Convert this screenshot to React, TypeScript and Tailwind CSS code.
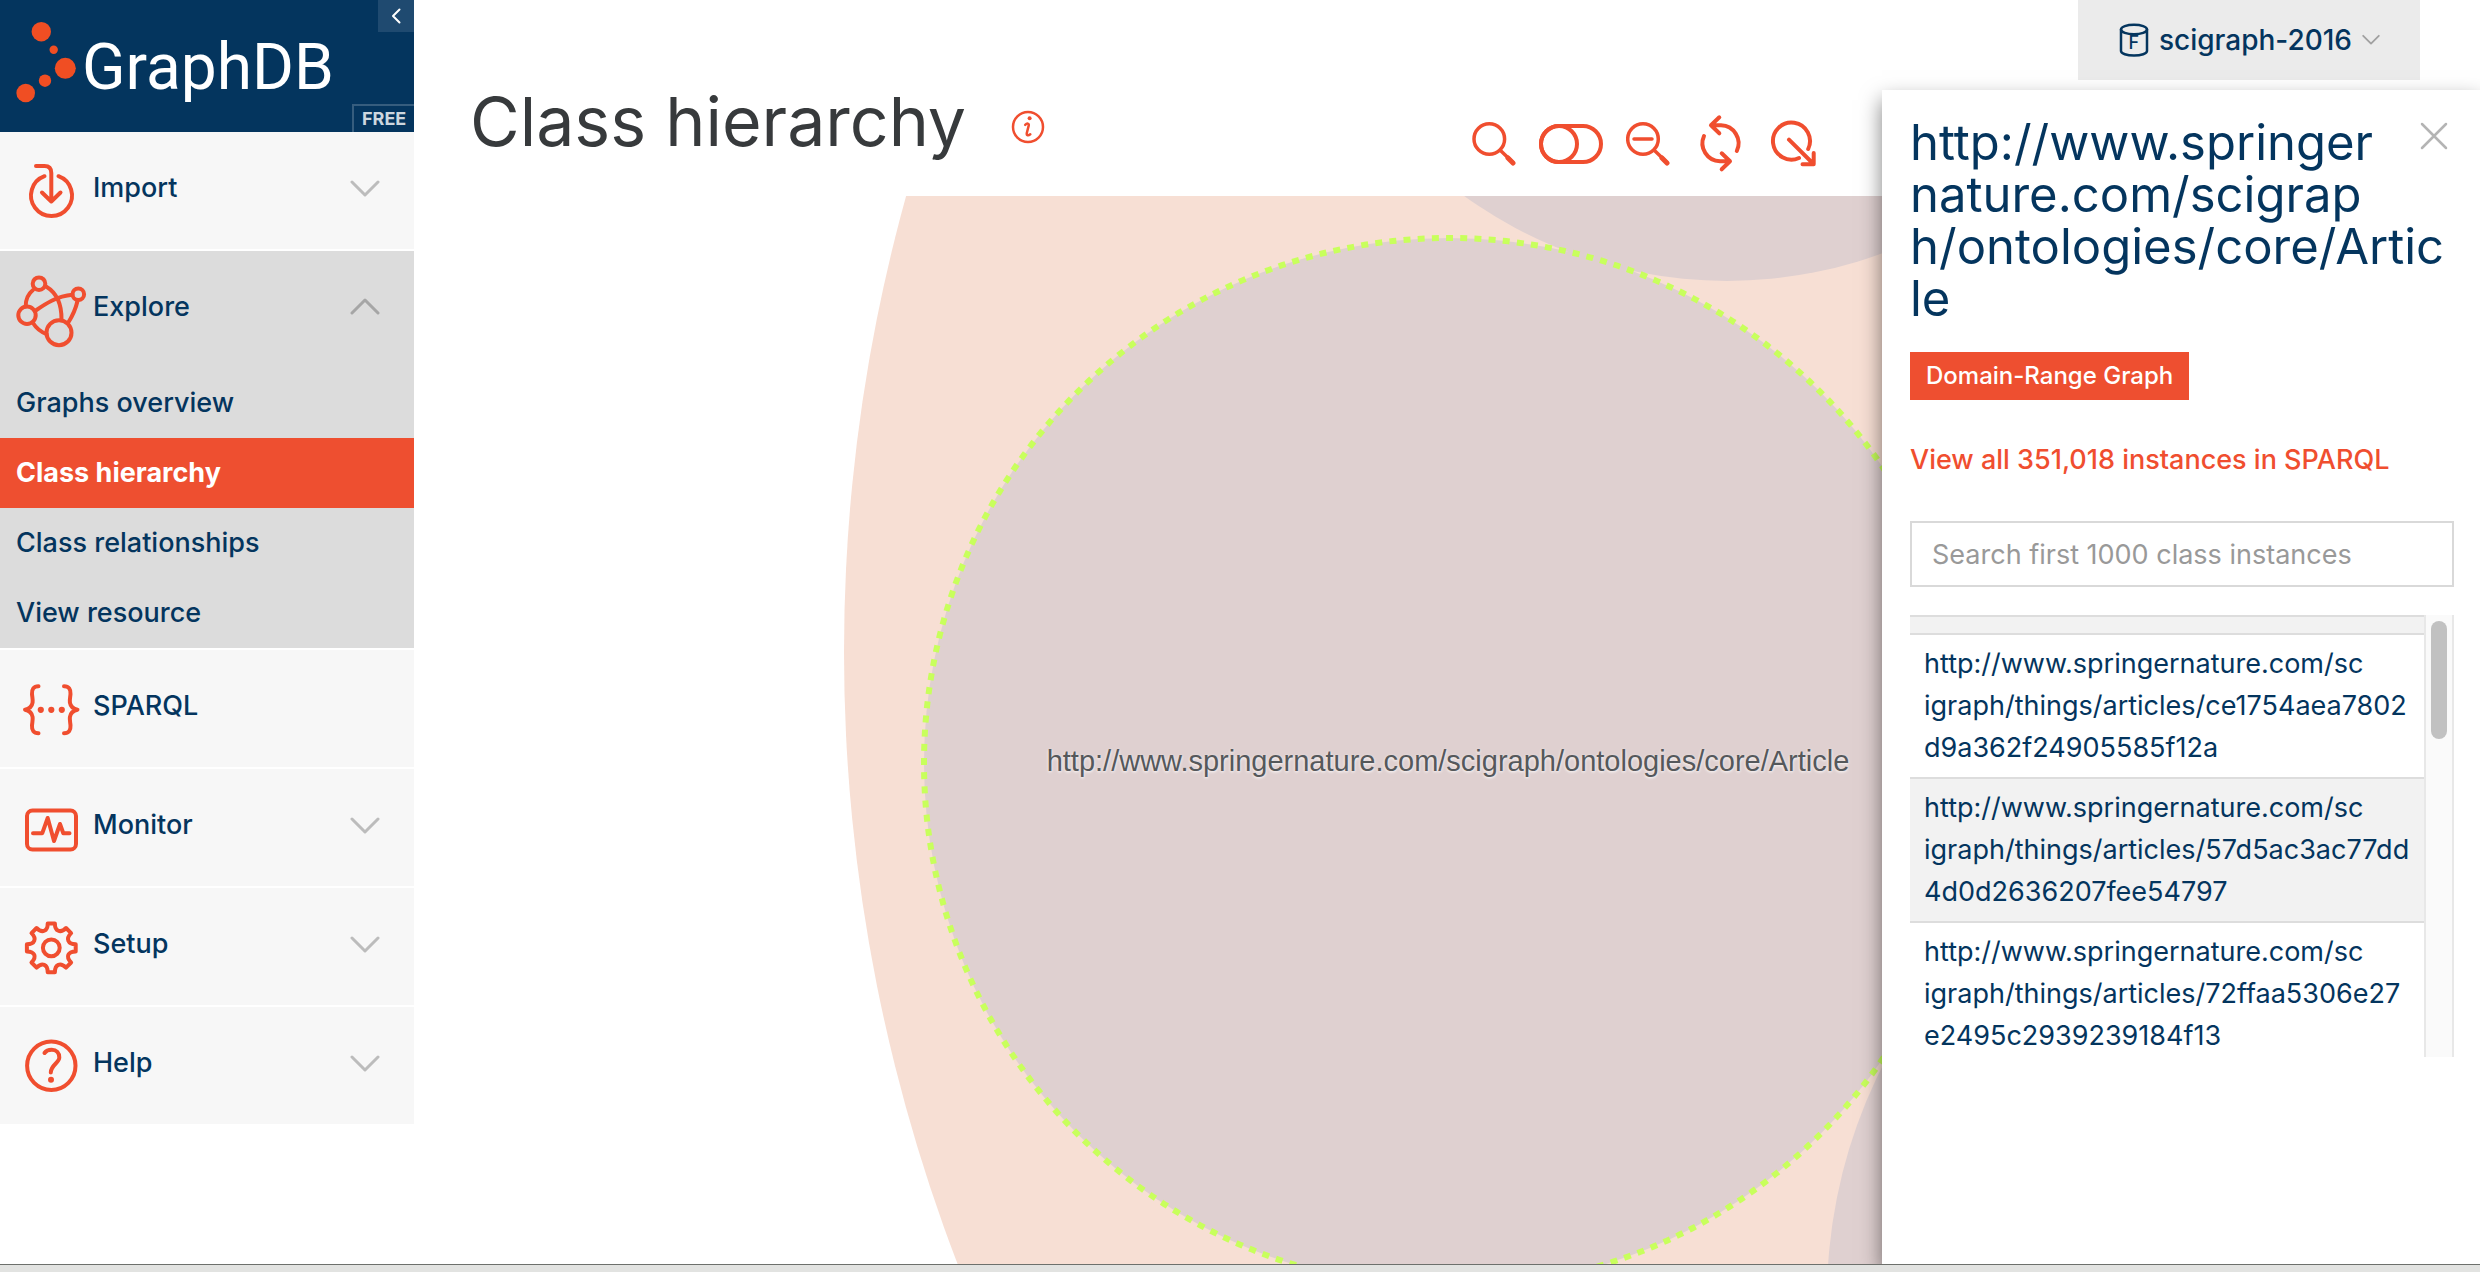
import React from "react";

/* ---------- icons ---------- */

type IconProps = { children: React.ReactNode; className: string; viewBox: string; width?: number };

function Stroke({ children, className, viewBox, width = 4 }: IconProps) {
  return (
    <svg
      aria-hidden="true"
      className={className}
      viewBox={viewBox}
      fill="none"
      stroke="currentColor"
      strokeWidth={width}
      strokeLinecap="round"
      strokeLinejoin="round"
    >
      {children}
    </svg>
  );
}

function MenuIcon({ children }: { children: React.ReactNode }) {
  return (
    <Stroke className="size-[72px] shrink-0 overflow-visible text-[#f04e2f]" viewBox="0 0 72 72">
      {children}
    </Stroke>
  );
}

const importIcon = (
  <MenuIcon>
    <path d="M29.5 21.2A20.5 20.5 0 1 0 43.5 21.2" />
    <path d="M21 11H29.5Q36.3 11 36.3 18V46.5M27 37.5L36.3 46.5L45.5 37.5" />
  </MenuIcon>
);

const exploreIcon = (
  <MenuIcon>
    <circle cx="24" cy="9.7" r="6.3" />
    <circle cx="63.3" cy="20.3" r="5.8" />
    <circle cx="12" cy="41.3" r="8.7" />
    <circle cx="44" cy="58.7" r="12.5" />
    <path d="M18 16Q10.5 22 10.7 32.5M31 12.5Q47 22 46.5 46M20 37C30 30 42 22 57.5 20.8M62.5 27Q60 38 53 49M18 49Q23 57 31.5 60" />
  </MenuIcon>
);

const sparqlIcon = (
  <MenuIcon>
    <path d="M23.5 13.2C18.5 13.2 16.7 16.5 17 21C17.2 24 18 26.5 17.6 29.5C17 33.5 13.5 36 10 36.7C13.5 37.4 17 40 17.6 44C18 47 17.2 49.5 17 52.5C16.7 57 18.5 60.3 23.5 60.3" />
    <path d="M49 13.2C54 13.2 55.8 16.5 55.5 21C55.3 24 54.5 26.5 54.9 29.5C55.5 33.5 59 36 62.5 36.7C59 37.4 55.5 40 54.9 44C54.5 47 55.3 49.5 55.5 52.5C55.8 57 54 60.3 49 60.3" />
    <g fill="currentColor" stroke="none">
      <circle cx="25.8" cy="36.8" r="3.1" />
      <circle cx="36.3" cy="36.8" r="3.1" />
      <circle cx="46.8" cy="36.8" r="3.1" />
    </g>
  </MenuIcon>
);

const monitorIcon = (
  <MenuIcon>
    <rect x="12" y="18.5" width="49" height="39" rx="5.5" />
    <path d="M18 41.2H27.3L32.7 26L39 49L45 32L48.3 41.2H54.5" />
  </MenuIcon>
);

const gearPath = (() => {
  const at = (x: number, y: number, turn: number) => {
    const a = (turn * Math.PI) / 4;
    const px = 36.3 + x * Math.cos(a) - y * Math.sin(a);
    const py = 36.8 + x * Math.sin(a) + y * Math.cos(a);
    return `${px.toFixed(2)} ${py.toFixed(2)}`;
  };
  let d = `M${at(24.4, -3.6, 0)}`;
  for (let i = 0; i < 8; i++) {
    d += `L${at(24.4, 3.6, i)}C${at(16.5, 3.6, i)} ${at(16.5, -3.6, i + 1)} ${at(24.4, -3.6, i + 1)}`;
  }
  return d + "Z";
})();

const setupIcon = (
  <MenuIcon>
    <path d={gearPath} />
    <circle cx="36.3" cy="36.8" r="8.4" />
  </MenuIcon>
);

const helpIcon = (
  <MenuIcon>
    <circle cx="36.3" cy="35.8" r="24.2" />
    <path d="M29.5 23C31 20.8 34 19.8 36.7 19.8C41.5 19.8 44.3 23 44.3 27.5C44.3 33 35.8 35 35.8 42.5" />
    <circle cx="36" cy="49.8" r="3" fill="currentColor" stroke="none" />
  </MenuIcon>
);

function Chevron({ up, className }: { up?: boolean; className: string }) {
  return (
    <Stroke className={className} viewBox="0 0 30 18" width={3}>
      <path d={up ? "M2 16L15 3L28 16" : "M2 2L15 15L28 2"} />
    </Stroke>
  );
}

/* ---------- sidebar ---------- */

type Item = { label: string; icon: React.ReactNode; children?: string[]; open?: boolean; leaf?: boolean };

const menu: Item[] = [
  { label: "Import", icon: importIcon },
  {
    label: "Explore",
    icon: exploreIcon,
    open: true,
    children: ["Graphs overview", "Class hierarchy", "Class relationships", "View resource"],
  },
  { label: "SPARQL", icon: sparqlIcon, leaf: true },
  { label: "Monitor", icon: monitorIcon },
  { label: "Setup", icon: setupIcon },
  { label: "Help", icon: helpIcon },
];

function Sidebar() {
  return (
    <aside className="w-[414px] shrink-0 text-[27px] font-medium text-[#04355e]">
      <div className="relative flex h-[132px] items-center bg-[#04355e]">
        <a href="#home" className="flex items-center text-white">
          <svg aria-hidden="true" className="h-[132px] w-20 shrink-0 fill-[#f04e23]" viewBox="0 0 80 132">
            <circle cx="41.3" cy="31.7" r="9.7" />
            <circle cx="53.7" cy="49.7" r="4.2" />
            <circle cx="65.3" cy="68.3" r="10.5" />
            <circle cx="45" cy="80.7" r="6.2" />
            <circle cx="25.7" cy="93" r="9.3" />
          </svg>
          <span className="pt-1 pl-0.5 font-[Roboto] text-[64px] font-normal">GraphDB</span>
        </a>
        <button
          type="button"
          aria-label="Collapse menu"
          className="absolute top-0 right-0 flex h-8 w-9 items-center justify-center bg-[#1f4a70] text-white"
        >
          <Stroke className="h-4 w-2.5" viewBox="0 0 10 16" width={2}>
            <path d="M8.5 1.5L2 8L8.5 14.5" />
          </Stroke>
        </button>
        <span className="absolute right-0 bottom-0 flex h-7 w-[62px] items-center border-t-2 border-l-2 border-[#365d7e] pl-2 text-lg font-bold text-[#cdd7df]">
          FREE
        </span>
      </div>

      <nav className="flex flex-col gap-0.5">
        {menu.map((item) => (
          <div key={item.label} className={item.open ? "bg-[#dcdcdc]" : "bg-[#f7f7f7]"}>
            <button
              type="button"
              aria-expanded={item.leaf ? undefined : !!item.open}
              className="flex h-[117px] w-full items-center pr-[34px] pl-[15px] text-left"
            >
              {item.icon}
              <span className="flex-1 pb-1 pl-1.5">{item.label}</span>
              {!item.leaf && (
                <Chevron
                  up={item.open}
                  className={
                    item.open ? "mb-2 h-[18px] w-[30px] text-[#a6a6a6]" : "mb-1 h-[18px] w-[30px] text-[#bcbcbc]"
                  }
                />
              )}
            </button>
            {item.children && (
              <ul>
                {item.children.map((c) => (
                  <li key={c}>
                    <a
                      href="#explore"
                      className={
                        c === "Class hierarchy"
                          ? "flex h-[70px] items-center bg-[#ee4f30] pl-4 font-bold text-white"
                          : "flex h-[70px] items-center pl-4"
                      }
                    >
                      {c}
                    </a>
                  </li>
                ))}
              </ul>
            )}
          </div>
        ))}
      </nav>
    </aside>
  );
}

/* ---------- header ---------- */

function ToolButton({ label, className, viewBox, children }: { label: string; className: string; viewBox: string; children: React.ReactNode }) {
  return (
    <button type="button" aria-label={label}>
      <Stroke className={className} viewBox={viewBox}>
        {children}
      </Stroke>
    </button>
  );
}

function Toolbar() {
  return (
    <div className="mt-28 mr-[262px] ml-auto flex h-16 gap-[23px] text-[#f04e2f]">
      <ToolButton label="Search" className="h-16 w-11" viewBox="0 0 44 64">
        <circle cx="17.3" cy="27" r="15.3" strokeWidth="3.5" />
        <path d="M28.5 38.5L41 50.5" strokeWidth="3.5" />
        <path d="M36 46L41 51" strokeWidth="5" />
      </ToolButton>
      <ToolButton label="Toggle prefixes" className="h-16 w-16" viewBox="0 0 64 64">
        <rect x="2" y="14" width="60" height="36" rx="18" />
        <circle cx="20" cy="32" r="18" />
      </ToolButton>
      <ToolButton label="Zoom out" className="h-16 w-11" viewBox="0 0 44 64">
        <circle cx="17" cy="27" r="15.3" strokeWidth="3.5" />
        <path d="M8 27H26M28.5 38.5L41 50.5" strokeWidth="3.5" />
        <path d="M36 46L41 51" strokeWidth="5" />
      </ToolButton>
      <ToolButton label="Reload" className="h-16 w-[54px]" viewBox="0 0 54 64">
        <path d="M18 13.3H28A18 18 0 0 1 43.8 39M26.3 5.3L18 13.3L26.3 21.3" />
        <path d="M11 24A18 18 0 0 0 27 49.3H37M28.7 41.3L37 49.3L28.7 57.3" />
      </ToolButton>
      <ToolButton label="Export" className="h-16 w-[46px]" viewBox="0 0 46 64">
        <path d="M38.2 37A18.5 18.5 0 1 0 29 46" />
        <path d="M19 27.7L43.5 52M43.7 41V52.3H32.5" />
      </ToolButton>
    </div>
  );
}

function RepositorySelect() {
  return (
    <button
      type="button"
      className="mr-[60px] flex h-20 items-center bg-[#ebebeb] pr-10 pl-[41px] text-[28px] font-medium text-[#04355e]"
    >
      <span className="relative mr-2.5 h-9 w-[30px]">
        <Stroke className="h-9 w-[30px]" viewBox="0 0 30 36" width={2.5}>
          <ellipse cx="15" cy="7.5" rx="13" ry="4.8" />
          <path d="M2 7.5V29C2 31.6 7.8 33.5 15 33.5S28 31.6 28 29V7.5" />
        </Stroke>
        <span className="absolute inset-0 flex items-end justify-center pb-1.5 text-lg leading-none font-medium">
          F
        </span>
      </span>
      scigraph-2016
      <Chevron className="ml-2.5 h-3 w-[18px] text-[#a0a0a0]" />
    </button>
  );
}

/* ---------- hierarchy diagram ---------- */

function HierarchyDiagram() {
  return (
    <svg
      className="block min-h-0 w-full flex-1"
      viewBox="414 196 2066 1068"
      preserveAspectRatio="xMinYMin slice"
      role="img"
      aria-label="Class hierarchy diagram"
    >
      <circle cx="2549" cy="652" r="1705" fill="#f7dfd4" />
      <circle cx="1727" cy="-168" r="449" fill="#dfd0d0" />
      <circle cx="2340" cy="1298" r="513" fill="#dfd0d0" />
      <circle
        cx="1449"
        cy="763"
        r="525"
        fill="#dfd0d0"
        stroke="#c8ff5c"
        strokeWidth="6"
        strokeDasharray="7 7.2"
      />
      <text
        x="1448"
        y="771"
        textAnchor="middle"
        className="fill-[#55585b] font-['Liberation_Sans'] text-[29px] text-shadow-[0_1px_3px_#ffffff]"
      >
        http://www.springernature.com/scigraph/ontologies/core/Article
      </text>
    </svg>
  );
}

/* ---------- details panel ---------- */

const titleLines = ["http://www.springer", "nature.com/scigrap", "h/ontologies/core/Artic", "le"];

const instances = [
  ["http://www.springernature.com/sc", "igraph/things/articles/ce1754aea7802", "d9a362f24905585f12a"],
  ["http://www.springernature.com/sc", "igraph/things/articles/57d5ac3ac77dd", "4d0d2636207fee54797"],
  ["http://www.springernature.com/sc", "igraph/things/articles/72ffaa5306e27", "e2495c2939239184f13"],
];

function Lines({ lines }: { lines: string[] }) {
  return (
    <>
      {lines.map((l) => (
        <span key={l} className="block whitespace-nowrap">
          {l}
        </span>
      ))}
    </>
  );
}

function DetailsPanel() {
  return (
    <section className="absolute top-[90px] right-0 bottom-0 w-[598px] bg-white pt-[27px] pr-[26px] pl-7 shadow-[0_10px_20px_rgba(0,0,0,0.5)]">
      <button type="button" aria-label="Close" className="absolute top-8 right-8 text-[#b4b4b4]">
        <Stroke className="size-7" viewBox="0 0 28 28" width={2.5}>
          <path d="M2 2L26 26M26 2L2 26" />
        </Stroke>
      </button>
      <h2 className="text-[49px] leading-[52px] text-[#04355e]">
        <Lines lines={titleLines} />
      </h2>
      <button type="button" className="mt-[27px] block h-12 bg-[#ee4f30] px-4 text-2xl font-medium text-white">
        Domain-Range Graph
      </button>
      <a href="#sparql" className="mt-[39px] block text-[27px] leading-[42px] font-medium text-[#f04e2f]">
        View all 351,018 instances in SPARQL
      </a>
      <input
        type="text"
        aria-label="Search first 1000 class instances"
        placeholder="Search first 1000 class instances"
        className="mt-10 block h-[66px] w-full border-2 border-[#d9d9d9] px-5 text-[27px] placeholder:text-[#999999]"
      />
      <div className="mt-7 flex h-[442px] overflow-hidden">
        <ul className="min-w-0 flex-1 text-[27px] leading-[42px] text-[#04355e]">
          <li className="h-[18px] border-t-2 border-[#dddddd] bg-[#f2f2f2]" />
          {instances.map((lines, i) => (
            <li
              key={lines[1]}
              className={
                i % 2 ? "border-t-2 border-[#dddddd] bg-[#f2f2f2] py-2 pl-3.5" : "border-t-2 border-[#dddddd] py-2 pl-3.5"
              }
            >
              <a href="#instance" className="block">
                <Lines lines={lines} />
              </a>
            </li>
          ))}
        </ul>
        <div className="w-[30px] border-x-2 border-[#e8e8e8] bg-[#fafafa] px-[5px] pt-1.5">
          <div className="h-[118px] rounded-full bg-[#c1c1c1]" />
        </div>
      </div>
    </section>
  );
}

export default function App() {
  return (
    <div className="flex h-screen min-h-[1130px] flex-col bg-white font-[Inter,sans-serif]">
      <div className="flex min-h-0 flex-1">
        <Sidebar />
        <main className="relative flex min-w-0 flex-1 flex-col overflow-hidden">
          <header className="flex h-[196px] shrink-0 items-start pl-14">
            <h1 className="mt-[77px] text-[68px] leading-[88px] whitespace-nowrap text-[#373a3c]">Class hierarchy</h1>
            <button type="button" aria-label="Page info" className="mt-[109px] ml-11 text-[#f04e2f]">
              <Stroke className="size-9" viewBox="0 0 36 36" width={2.5}>
                <circle cx="18" cy="18" r="15" />
                <path d="M15.2 15.8C17 14 19.3 14.2 18.7 16.6L16.8 24C16.3 26.6 18.4 26.8 20.3 25.2" />
                <circle cx="19.6" cy="9.2" r="2" fill="currentColor" stroke="none" />
              </Stroke>
            </button>
            <Toolbar />
            <RepositorySelect />
          </header>
          <HierarchyDiagram />
          <DetailsPanel />
        </main>
      </div>
      <footer className="h-2 shrink-0 border-t border-[#6d706c] bg-[#e2e3e1]" />
    </div>
  );
}
